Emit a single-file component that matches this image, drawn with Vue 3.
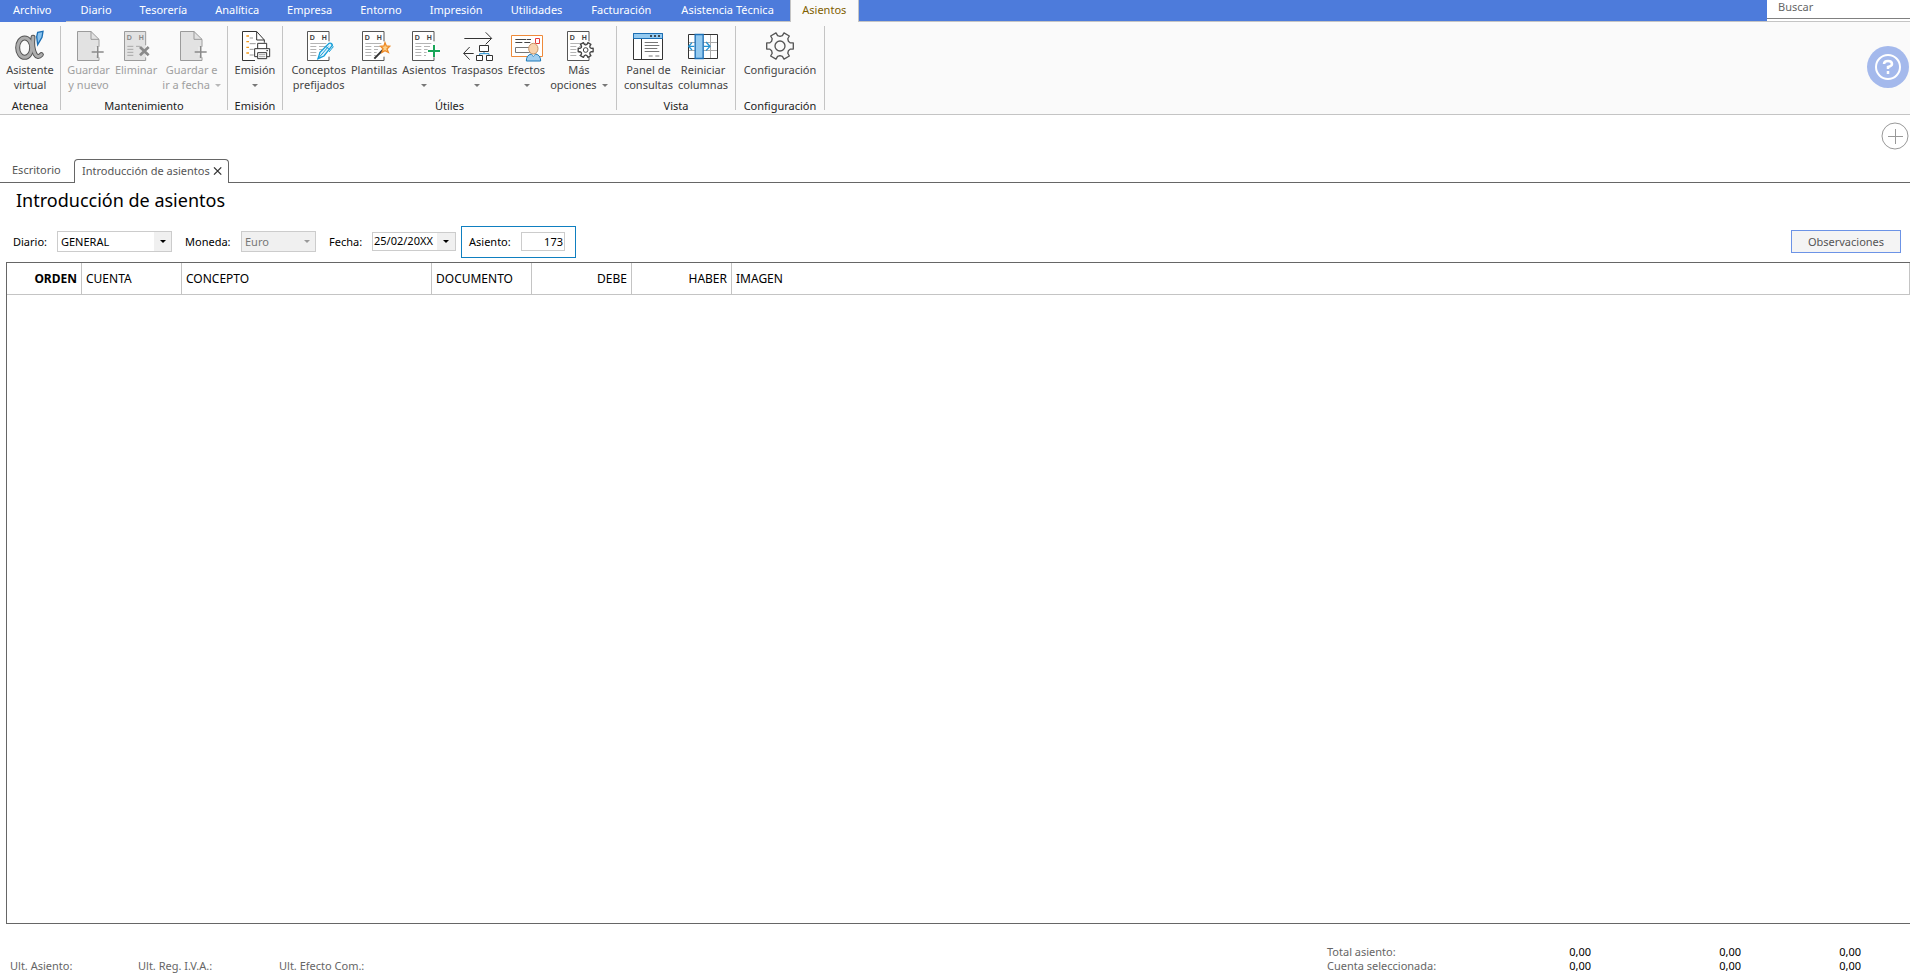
<script setup>
import { ref } from 'vue'

const menu = ['Archivo', 'Diario', 'Tesorería', 'Analítica', 'Empresa', 'Entorno', 'Impresión', 'Utilidades', 'Facturación', 'Asistencia Técnica', 'Asientos']
const activeMenu = ref('Asientos')

const groups = [
  { name: 'Atenea', size: 'g-atenea', items: [{ icon: 'alpha', lines: ['Asistente', 'virtual'] }] },
  {
    name: 'Mantenimiento', size: 'g-mant', items: [
      { icon: 'save', lines: ['Guardar', 'y nuevo'], disabled: true },
      { icon: 'remove', lines: ['Eliminar'], disabled: true },
      { icon: 'save', lines: ['Guardar e', 'ir a fecha'], disabled: true, arrow: true },
    ],
  },
  { name: 'Emisión', size: 'g-emision', items: [{ icon: 'print', lines: ['Emisión', ''], arrow: true }] },
  {
    name: 'Útiles', size: 'g-utiles', items: [
      { icon: 'pen', lines: ['Conceptos', 'prefijados'] },
      { icon: 'wand', lines: ['Plantillas'] },
      { icon: 'add', lines: ['Asientos', ''], arrow: true },
      { icon: 'transfer', lines: ['Traspasos', ''], arrow: true },
      { icon: 'bill', lines: ['Efectos', ''], arrow: true },
      { icon: 'more', lines: ['Más', 'opciones'], arrow: true },
    ],
  },
  {
    name: 'Vista', size: 'g-vista', items: [
      { icon: 'panel', lines: ['Panel de', 'consultas'] },
      { icon: 'columns', lines: ['Reiniciar', 'columnas'] },
    ],
  },
  { name: 'Configuración', size: 'g-config', items: [{ icon: 'gear', lines: ['Configuración'] }] },
]

const diario = ref('GENERAL')
const moneda = ref('Euro')
const fecha = ref('25/02/20XX')
const asiento = ref('173')

const totals = [
  { label: 'Total asiento:', values: ['0,00', '0,00', '0,00'] },
  { label: 'Cuenta seleccionada:', values: ['0,00', '0,00', '0,00'] },
]

// Outline of a six-toothed gear centred on (cx, cy).
function gear(cx, cy, outer, inner) {
  const steps = [[-13, outer], [13, outer], [17, inner + (outer - inner) * 0.25], [30, inner], [43, inner + (outer - inner) * 0.25]]
  const pts = []
  for (let t = 0; t < 6; t++) {
    for (const [deg, r] of steps) {
      const a = ((t * 60 + deg) * Math.PI) / 180
      pts.push(`${(cx + r * Math.cos(a)).toFixed(1)} ${(cy + r * Math.sin(a)).toFixed(1)}`)
    }
  }
  return 'M' + pts.join('L') + 'Z'
}
</script>

<template>
  <div class="app">
    <header class="menubar">
      <nav class="menu">
        <button v-for="m in menu" :key="m" type="button" :class="{ active: m === activeMenu }" @click="activeMenu = m">{{ m }}</button>
      </nav>
      <input class="search" type="text" placeholder="Buscar" aria-label="Buscar">
    </header>

    <section class="ribbon">
      <div v-for="g in groups" :key="g.name" class="group" :class="g.size">
        <div class="tools">
          <button v-for="(t, i) in g.items" :key="i" type="button" class="tool" :disabled="t.disabled">
            <svg viewBox="0 0 96 96" class="icon" fill="none" stroke="#444" stroke-width="3" aria-hidden="true">
              <template v-if="t.icon === 'alpha'">
                <g stroke="#555" stroke-width="15" stroke-linecap="round">
                  <ellipse cx="32" cy="53" rx="21" ry="29" />
                  <path d="M57 22Q53 52 63 72Q71 86 82 74" />
                </g>
                <g stroke="#adadad" stroke-width="9" stroke-linecap="round">
                  <ellipse cx="32" cy="53" rx="21" ry="29" />
                  <path d="M57 22Q53 52 63 72Q71 86 82 74" />
                </g>
                <path d="M71 7L87 4L84 22L71 44L68 20Z" fill="#8cc4ee" stroke="#1c6fb5" stroke-width="4" />
              </template>
              <template v-else-if="t.icon === 'save'">
                <path d="M13 4H54L77 28V50H68V76H77V91H13Z" fill="#e2e2e2" stroke="none" />
                <path d="M78 50V28L54 4.500H13.500V91.500H78V82M54 5V28H78" stroke="#9b9b9b" />
                <path d="M74 48V84M56 66H92" stroke="#8a8a8a" stroke-width="5" />
              </template>
              <template v-else-if="t.icon === 'remove'">
                <path d="M13 5H77V91H13Z" fill="#e2e2e2" stroke="none" />
                <path d="M77 46V4.500H13.500V91.500H77V82" stroke="#9b9b9b" />
                <text x="20" y="29" class="dh pale">D</text><text x="56" y="29" class="dh pale">H</text>
                <path d="M22 49H40M48 49H60M22 58H40M22 67H40M22 76H40" stroke="#a8a8a8" />
                <path d="M60 51L86 76M86 51L60 76" stroke="#8a8a8a" stroke-width="8" />
              </template>
              <template v-else-if="t.icon === 'print'">
                <path d="M76 38V30L53 4.500H10.500V91.500H48" fill="#fff" stroke="#333" />
                <path d="M53 5V30H76" stroke="#333" />
                <path d="M22 18H30M22 35H30M22 52H30M22 69H30" stroke="#f39a1e" stroke-width="4" />
                <path d="M32 24H42M32 41H50M32 58H44M32 75H44" stroke="#999" />
                <path d="M56 56V40H83V56M56 80H47V56H92V80H83" fill="#fff" stroke="#333" />
                <path d="M56 68H83V86H56Z" fill="#fff" stroke="#333" />
                <path d="M60 74H79M60 80H79" stroke="#777" stroke-width="2" /><path d="M82 62H87" stroke="#333" />
              </template>
              <template v-else-if="['pen', 'wand', 'add', 'more'].includes(t.icon)">
                <path d="M78 34V4.500H13.500V91.500H78V80" fill="#fff" stroke="#555" />
                <text x="20" y="29" class="dh">D</text><text x="56" y="29" class="dh">H</text>
                <path d="M22 49.500H40M22 58.500H40M22 67.500H40M22 76.500H40M22 40.500H70M48 49.500H66M48 58.500H60M48 67.500H56M48 76.500H54" stroke="#b4b4b4" />
                <template v-if="t.icon === 'pen'">
                  <path d="M45 86L51 67L78 40Q88 38 88 46L63 78Z" fill="#dff2fc" stroke="#179fd8" stroke-width="4" />
                  <path d="M45 86L76 50M68 49L80 59M83 42L91 50L78 66" stroke="#179fd8" />
                </template>
                <template v-else-if="t.icon === 'wand'">
                  <path d="M49 86L76 58" stroke="#333" stroke-width="6" />
                  <path d="M81 38L85 48L95 49L87 57L91 67L81 62L72 67L75 56L68 49L78 48Z" fill="#fbd08a" stroke="#ee8a27" stroke-width="4" />
                </template>
                <template v-else-if="t.icon === 'add'">
                  <path d="M78 44V82M59 63H96" stroke="#fff" stroke-width="12" />
                  <path d="M78 45V81M60 63H96" stroke="#18a558" stroke-width="6" />
                </template>
                <template v-else>
                  <path :d="gear(68, 60, 23, 15)" fill="#fff" stroke-linejoin="round" stroke-width="4" />
                  <circle cx="68" cy="60" r="7" />
                </template>
              </template>
              <template v-else-if="t.icon === 'transfer'">
                <path d="M10 25.500H91M74 7L92 25L74 43M38 70.500H8M26 51L8 70L26 89" stroke="#333" />
                <path d="M69 63V71M56 78V71H84V78" stroke="#2491d0" />
                <path d="M55.500 46.500H82.500V64.500H55.500ZM46.500 76.500H64.500V91.500H46.500ZM76.500 76.500H94.500V91.500H76.500Z" fill="#fff" stroke="#333" />
              </template>
              <template v-else-if="t.icon === 'bill'">
                <path d="M1.500 16.500H94.500V79.500H1.500Z" fill="#fff" stroke="#ee8a3a" />
                <path d="M13 28.500H46M13 37.500H34M48 28.500H60M40 37.500H58" stroke="#444" />
                <path d="M73.500 25.500H85.500V40.500H73.500Z" stroke="#e53b3b" /><path d="M13.500 52.500H56V67.500H13.500Z" stroke="#777" />
                <path d="M46 93Q46 75 61 72H74Q89 75 89 93Z" fill="#a3cff0" stroke="#1c79b8" />
                <path d="M60 70L67 80L75 70Z" fill="#fff" stroke="#1c79b8" stroke-width="2" />
                <ellipse cx="67" cy="56" rx="14" ry="16" fill="#f8d3ae" stroke="#c79468" />
              </template>
              <template v-else-if="t.icon === 'panel'">
                <path d="M4.500 10.500H91.500V88.500H4.500Z" fill="#fff" stroke="#333" />
                <path d="M4.500 10.500H91.500V25.500H4.500Z" fill="#94caf0" stroke="#1c6fb5" />
                <path d="M28.500 27V88" stroke="#333" />
                <path d="M54 18H60M66 18H72M78 18H84" stroke="#222" stroke-width="5" />
                <path d="M38 37.500H78M38 46.500H82M38 55.500H76M38 64.500H82M50 78H62M70 78H82" stroke="#777" />
              </template>
              <template v-else-if="t.icon === 'columns'">
                <path d="M4.500 13.500H91.500V85.500H4.500Z" fill="#fff" stroke="#333" />
                <path d="M6 37.500H90M6 61.500H90M70.500 15V84" stroke="#aaa" />
                <path d="M24.500 13.500H48.500V85.500H24.500Z" fill="#94caf0" stroke="#1c6fb5" stroke-width="4" />
                <path d="M22 49H6M15 38L5 49L15 60M50 49H68M57 36L69 49L57 62" stroke="#2491d0" stroke-width="4" />
              </template>
              <template v-else>
                <path :d="gear(48, 48, 41, 29)" stroke="#555" stroke-width="4" stroke-linejoin="round" />
                <circle cx="48" cy="48" r="15" stroke="#555" stroke-width="4" />
              </template>
            </svg>
            <span class="line">{{ t.lines[0] }}</span>
            <span v-if="t.lines.length > 1" class="line">{{ t.lines[1] }}<i v-if="t.arrow" class="caret" :class="{ alone: !t.lines[1] }"></i></span>
          </button>
        </div>
        <div class="group-name">{{ g.name }}</div>
      </div>
      <button type="button" class="help" aria-label="Ayuda">
        <svg viewBox="0 0 42 42" fill="none" stroke="#fff" stroke-width="2" aria-hidden="true">
          <circle cx="21" cy="21" r="12" />
          <path d="M17 18Q17 15 21 15Q25 15 25 18Q25 20 21 21V23" stroke-width="2.500" />
          <path d="M21 25V28" stroke-width="2.500" />
        </svg>
      </button>
    </section>

    <div class="strip">
      <button type="button" class="plus" aria-label="Añadir">
        <svg viewBox="0 0 28 28" fill="none" stroke="#999" aria-hidden="true"><circle cx="14" cy="14" r="13" /><path d="M14.500 7V22M7 14.500H22" /></svg>
      </button>
    </div>

    <nav class="tabs">
      <button type="button" class="tab">Escritorio</button>
      <div class="tab current">
        <span>Introducción de asientos</span>
        <button type="button" class="close" aria-label="Cerrar">
          <svg viewBox="0 0 8 8" stroke="#333" stroke-width="1.500" aria-hidden="true"><path d="M0 0L8 8M8 0L0 8" /></svg>
        </button>
      </div>
    </nav>

    <main>
      <h1>Introducción de asientos</h1>
      <form class="filters" @submit.prevent>
        <label for="diario" class="l-diario">Diario:</label>
        <span class="combo c-diario"><select id="diario" v-model="diario"><option>GENERAL</option></select></span>
        <label for="moneda" class="l-moneda">Moneda:</label>
        <span class="combo c-moneda off"><select id="moneda" v-model="moneda" disabled><option>Euro</option></select></span>
        <label for="fecha" class="l-fecha">Fecha:</label>
        <span class="date"><input id="fecha" v-model="fecha" type="text"><button type="button" aria-label="Abrir calendario"></button></span>
        <span class="entry"><label for="asiento">Asiento:</label><input id="asiento" v-model="asiento" type="text"></span>
        <button type="button" class="notes">Observaciones</button>
      </form>

      <div class="grid">
        <table>
          <colgroup><col class="w75"><col class="w100"><col class="w250"><col class="w100"><col class="w100"><col class="w100"><col></colgroup>
          <thead>
            <tr>
              <th class="num strong">ORDEN</th><th>CUENTA</th><th>CONCEPTO</th><th>DOCUMENTO</th>
              <th class="num">DEBE</th><th class="num">HABER</th><th>IMAGEN</th>
            </tr>
          </thead>
        </table>
      </div>
    </main>

    <footer>
      <div class="last"><span>Ult. Asiento:</span><span>Ult. Reg. I.V.A.:</span><span>Ult. Efecto Com.:</span></div>
      <table class="totals">
        <tbody>
          <tr v-for="r in totals" :key="r.label"><th scope="row">{{ r.label }}</th><td v-for="(v, i) in r.values" :key="i">{{ v }}</td></tr>
        </tbody>
      </table>
    </footer>
  </div>
</template>

<style>
body { margin: 0; background: #fff; }
</style>

<style scoped>
.app { display: flex; flex-direction: column; min-height: 100vh; box-sizing: border-box; font: 11px/14px "Noto Sans", "Open Sans", sans-serif; color: #444; overflow: hidden; }
.app *, .app *::before, .app *::after { box-sizing: border-box; }
button, input, select { font: inherit; color: inherit; margin: 0; padding: 0; border: 0; background: none; border-radius: 0; }
.menubar { display: flex; height: 22px; background: #4d7bdb; border-bottom: 1px solid #c4c4c4; }
.menu { display: flex; flex: 1; }
.menu button { padding: 0 14px 2px; color: #fff; white-space: nowrap; }
.menu button:first-child { padding: 0 14px 3px 13px; height: 22px; background: #4d7bdb; }
.menu button:nth-child(2), .menu button:nth-child(9) { margin-left: 1px; }
.menu button:nth-child(10) { padding: 0 16px 2px; }
.menu .active { width: 69px; height: 22px; background: #fafafa; color: #7f6000; padding: 0 0 3px; border-left: 1px solid #c4c4c4; border-right: 1px solid #c4c4c4; }
.search { width: 143px; height: 19px; padding: 0 11px 5px; background: #fff; border-bottom: 1px solid #808080; outline: 0; box-shadow: 0 2px 0 #fff; }
.search::placeholder { color: #666; opacity: 1; }
.ribbon { display: flex; align-items: flex-start; height: 93px; padding-top: 4px; background: #fafafa; border-bottom: 1px solid #c4c4c4; }
.group { display: flex; flex-direction: column; height: 84px; border-right: 1px solid #c4c4c4; }
.g-atenea { width: 61px; }
.g-mant { width: 167px; }
.g-emision { width: 55px; }
.g-utiles { width: 334px; }
.g-vista { width: 119px; }
.g-config { width: 89px; }
.tools { display: flex; flex: 1; justify-content: center; align-items: flex-start; gap: 5px; padding-top: 4px; }
.tool { display: flex; flex-direction: column; align-items: center; white-space: nowrap; }
.tool:disabled { color: #a0a0a0; }
.icon { width: 32px; height: 32px; overflow: visible; }
.line { height: 15px; line-height: 15px; }
.caret { display: inline-block; margin-left: 5px; vertical-align: 2px; border: 3px solid transparent; border-top-color: #777; border-bottom: 0; }
.alone { margin-left: 0; }
.tool:disabled .caret { border-top-color: #b8b8b8; }
.group-name { height: 15px; line-height: 15px; text-align: center; color: #222; margin-bottom: -3px; }
.dh { font: bold 21px "Liberation Sans", sans-serif; fill: #444; stroke: none; }
.pale { fill: #8a8a8a; }
.help { margin-left: auto; margin-top: 20px; width: 42px; height: 42px; border-radius: 50%; background: #a4b9ec; margin-right: 1px; }
.help svg, .plus svg, .close svg { display: block; width: 100%; height: 100%; overflow: visible; }
.strip { display: flex; justify-content: flex-end; height: 44px; padding: 7px 1px 0 0; }
.plus { width: 28px; height: 28px; }
.tabs { display: flex; height: 24px; border-bottom: 1px solid #666; padding-left: 12px; }
.tab { width: 62px; padding-bottom: 2px; text-align: left; color: #555; }
.current { display: flex; align-items: center; gap: 4px; width: 155px; height: 24px; padding: 0 7px 2px; border: 1px solid #666; border-bottom: 0; border-radius: 4px 4px 0 0; background: #fff; white-space: nowrap; }
.close { width: 8px; height: 8px; }
main { display: flex; flex-direction: column; flex: 1; }
h1 { margin: 0; padding-left: 16px; font-size: 18px; line-height: 34px; font-weight: 400; color: #000; }
.filters { display: flex; align-items: center; height: 45px; padding: 6px 9px 2px 13px; color: #000; }
.l-diario { width: 44px; }
.l-moneda { width: 56px; margin-left: 13px; }
.l-fecha { width: 43px; margin-left: 13px; }
.combo { position: relative; height: 21px; border: 1px solid #ccc; }
.combo select { appearance: none; width: 100%; height: 19px; padding: 1px 0 0 3px; opacity: 1; }
.combo::after { content: ""; position: absolute; right: 5px; top: 8px; border: 3px solid transparent; border-top-color: #000; border-bottom: 0; pointer-events: none; }
.c-diario { width: 115px; background: linear-gradient(to left, #f0f0f0 17px, #fff 17px); }
.c-moneda { width: 75px; background: #f0f0f0; color: #777; }
.off::after { border-top-color: #999; }
.date { display: flex; width: 84px; height: 19px; border: 1px solid #ccc; }
.date input { flex: 1; min-width: 0; padding: 0 0 2px 1px; }
.date button { width: 18px; background: #f0f0f0; display: flex; align-items: center; justify-content: center; }
.date button::after { content: ""; border: 3px solid transparent; border-top-color: #000; border-bottom: 0; }
.entry { display: flex; align-items: center; justify-content: space-between; width: 115px; height: 32px; margin-left: 5px; padding: 0 10px 0 7px; border: 1px solid #0f7fc0; }
.entry input { width: 44px; height: 19px; border: 1px solid #ccc; text-align: right; padding: 0 1px; }
.notes { width: 110px; height: 23px; margin-left: auto; border: 1px solid #6c93e6; background: #f4f4f4; color: #555; }
.grid { flex: 1; margin-left: 6px; border: 1px solid #666; border-right: 0; }
.grid table { width: 100%; table-layout: fixed; border-collapse: separate; border-spacing: 0; }
.grid th { height: 32px; padding: 0 4px; border-right: 1px solid #c4c4c4; border-bottom: 1px solid #c4c4c4; text-align: left; font-size: 12px; font-weight: 400; color: #000; }
.grid .num { text-align: right; }
.grid .strong { font-weight: 700; }
.w75 { width: 75px; }
.w100 { width: 100px; }
.w250 { width: 250px; }
footer { display: flex; justify-content: space-between; align-items: flex-end; height: 56px; padding: 0 49px 7px 10px; color: #666; }
.last { display: grid; grid-template-columns: 128px 141px 120px; }
.totals { border-collapse: collapse; }
.totals th { width: 147px; font-weight: 400; text-align: left; padding: 0; }
.totals td { width: 150px; padding: 0; text-align: right; color: #000; }
.totals td:first-of-type { width: 117px; }
.totals td:last-child { width: 120px; }
</style>
